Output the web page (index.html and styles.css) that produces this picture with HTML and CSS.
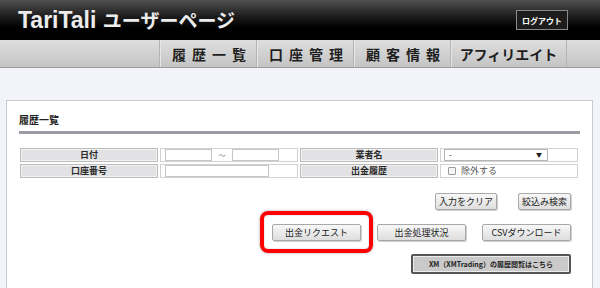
FILE: index.html
```html
<!DOCTYPE html>
<html lang="ja">

<head>
    <meta charset="UTF-8">
    <meta name="viewport" content="width=device-width, initial-scale=1.0">
    <title>TariTali ユーザーページ</title>
    <link rel="stylesheet" href="styles.css">
</head>

<body>
    <header class="top">
        <h1 class="site-title">TariTali <span class="site-title-jp">ユーザーページ</span></h1>
        <a href="#" class="logout">ログアウト</a>
    </header>

    <nav class="menu">
        <a href="#" class="menu-item spaced">履歴一覧</a>
        <a href="#" class="menu-item spaced">口座管理</a>
        <a href="#" class="menu-item spaced">顧客情報</a>
        <a href="#" class="menu-item wide">アフィリエイト</a>
    </nav>

    <main class="page">
        <section class="panel">
            <h2 class="panel-title">履歴一覧</h2>

            <table class="search">
                <tr>
                    <th>日付</th>
                    <td class="val">
                        <input type="text" class="field short">
                        <span class="tilde">～</span>
                        <input type="text" class="field short">
                    </td>
                    <th>業者名</th>
                    <td class="val val-right">
                        <span class="select"><span>-</span><span class="arrow">▼</span></span>
                    </td>
                </tr>
                <tr>
                    <th>口座番号</th>
                    <td class="val">
                        <input type="text" class="field long">
                    </td>
                    <th>出金履歴</th>
                    <td class="val val-right">
                        <span class="check"></span><span class="check-label">除外する</span>
                    </td>
                </tr>
            </table>

            <div class="actions">
                <div class="btn-row">
                    <button class="btn">入力をクリア</button>
                    <button class="btn">絞込み検索</button>
                </div>
                <div class="btn-row row-mid">
                    <!-- red box marks the request button -->
                    <span class="marked">
                        <button class="btn btn-md">出金リクエスト</button>
                    </span>
                    <button class="btn btn-md">出金処理状況</button>
                    <button class="btn btn-md">CSVダウンロード</button>
                </div>
                <div class="btn-row">
                    <button class="btn btn-xm">XM（XMTrading）の履歴閲覧はこちら</button>
                </div>
            </div>
        </section>
    </main>
</body>

</html>
```

FILE: styles.css
```css
* {
    box-sizing: border-box;
    margin: 0;
    padding: 0;
}

body {
    font-family: "Noto Sans CJK JP", "Liberation Sans", sans-serif;
    width: 600px;
    height: 288px;
    overflow: hidden;
    background-color: #f3f4f9;
    color: #222;
}

/* header */
.top {
    height: 40px;
    display: flex;
    align-items: center;
    justify-content: space-between;
    padding: 0 32px 0 18px;
    background: linear-gradient(#505050 0%, #1e1e1e 40%, #000 70%, #000 100%);
}

.site-title {
    font-family: "Liberation Sans", "Noto Sans CJK JP", sans-serif;
    font-size: 23px;
    font-weight: bold;
    color: #ececec;
    line-height: 1;
    white-space: nowrap;
}

.site-title-jp {
    font-family: "Noto Sans CJK JP", sans-serif;
    font-size: 19px;
}

.logout {
    width: 52px;
    height: 20px;
    display: flex;
    align-items: center;
    justify-content: center;
    border: 1px solid #8a8a8a;
    background-color: #1c1c1c;
    color: #fff;
    font-size: 8px;
    font-weight: bold;
    text-decoration: none;
}

/* menu */
.menu {
    height: 28px;
    display: flex;
    justify-content: flex-end;
    padding-right: 33px;
    background: linear-gradient(#dedede, #c4c4c4);
    border-bottom: 1px solid #9c9c9c;
}

.menu-item {
    width: 97px;
    display: flex;
    align-items: center;
    justify-content: center;
    border-left: 1px solid #b4b4b4;
    box-shadow: inset 1px 0 0 #e6e6e6;
    font-size: 14px;
    font-weight: bold;
    color: #1e1e1e;
    text-decoration: none;
}

.menu-item.spaced {
    letter-spacing: 6px;
    padding-left: 8px;
}

.menu-item.wide {
    width: 117px;
    border-right: 1px solid #b4b4b4;
}

/* content */
.page {
    padding: 32px 7px 0 6px;
}

.panel {
    height: 200px;
    background-color: #fff;
    border: 1px solid #c9cbd3;
    border-bottom: none;
    padding: 12px 12px 0 12px;
}

.panel-title {
    font-size: 10px;
    line-height: 14px;
    font-weight: bold;
    color: #222;
    padding-bottom: 4px;
    border-bottom: 3px solid #9a9da4;
    margin-bottom: 12px;
}

.search {
    width: 562px;
    margin-left: -1px;
    border-spacing: 2px;
    table-layout: fixed;
}

.search th,
.search td {
    height: 14px;
    font-size: 9px;
    line-height: 12px;
}

.search th {
    background-color: #e2e2e4;
    border: 1px solid #bcbcbc;
    box-shadow: inset 0 0 0 1px #f2f2f2;
    color: #2a2a2a;
    font-weight: bold;
    text-align: center;
}

.search td.val {
    border: 1px solid #d2d2d2;
    padding: 0 0 0 4px;
    white-space: nowrap;
}

.search td.val-right {
    padding-left: 3px;
}

.field {
    height: 12px;
    border: 1px solid #c6c6c6;
    vertical-align: top;
    outline: none;
}

.field.short {
    width: 47px;
}

.field.long {
    width: 104px;
}

.tilde {
    display: inline-block;
    width: 16px;
    text-align: center;
    font-size: 7px;
    color: #777;
    vertical-align: top;
}

.select {
    width: 104px;
    height: 12px;
    display: flex;
    justify-content: space-between;
    align-items: center;
    padding: 0 5px 0 4px;
    border: 1px solid #b5b5b5;
    font-size: 8px;
}

.arrow {
    font-size: 6px;
}

.check {
    display: inline-block;
    width: 8px;
    height: 8px;
    margin: 0 5px 0 4px;
    border: 1px solid #9c9c9c;
    border-radius: 1px;
    background-color: #f4f4f4;
    vertical-align: -1px;
}

.check-label {
    font-size: 9px;
    color: #555;
}

/* buttons */
.actions {
    margin-top: 13px;
    padding-right: 9px;
    display: flex;
    flex-direction: column;
    align-items: flex-end;
    gap: 14px;
}

.btn-row {
    display: flex;
    gap: 21px;
}

.row-mid {
    gap: 16px;
    margin-bottom: -1px;
}

.btn {
    height: 17px;
    padding: 0 3px;
    font-family: "Noto Sans CJK JP", "Liberation Sans", sans-serif;
    font-size: 9px;
    line-height: 15px;
    color: #222;
    background: linear-gradient(#f8f8f8, #dedede);
    border: 1px solid #a8a8a8;
    border-radius: 2px;
    box-shadow: 1px 1px 0 #d0d0d0;
    cursor: pointer;
}

.btn-md {
    width: 89px;
}

.btn-xm {
    width: 160px;
    height: 20px;
    font-size: 7px;
    font-weight: bold;
    background: #c9c9c9;
    border: 2px solid #555;
    box-shadow: inset 0 0 0 1px #ececec;
}

.marked {
    position: relative;
    display: flex;
}

.marked::after {
    content: "";
    position: absolute;
    top: -13px;
    left: -12px;
    right: -12px;
    bottom: -12px;
    border: 4px solid #f00;
    border-radius: 8px;
    box-shadow: 0 0 3px rgba(0, 0, 0, 0.35), inset 0 0 2px rgba(0, 0, 0, 0.25);
    pointer-events: none;
}
```
